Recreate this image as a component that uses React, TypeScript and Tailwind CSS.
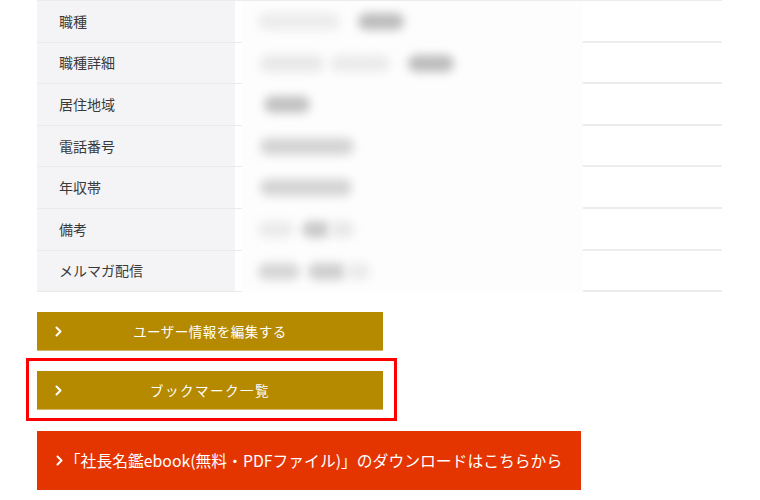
import React from "react";

const rows: { label: string; blobs: { l: number; w: number; c: string }[] }[] = [
  { label: "職種", blobs: [{ l: 16, w: 82, c: "#ececec" }, { l: 116, w: 46, c: "#bdbdbd" }] },
  { label: "職種詳細", blobs: [{ l: 18, w: 64, c: "#e8e8e8" }, { l: 88, w: 60, c: "#ebebeb" }, { l: 166, w: 46, c: "#bdbdbd" }] },
  { label: "居住地域", blobs: [{ l: 22, w: 46, c: "#c2c2c2" }] },
  { label: "電話番号", blobs: [{ l: 18, w: 94, c: "#d4d4d4" }] },
  { label: "年収帯", blobs: [{ l: 18, w: 92, c: "#d4d4d4" }] },
  { label: "備考", blobs: [{ l: 16, w: 36, c: "#ebebeb" }, { l: 60, w: 28, c: "#cacaca" }, { l: 88, w: 24, c: "#e8e8e8" }] },
  { label: "メルマガ配信", blobs: [{ l: 16, w: 42, c: "#d6d6d6" }, { l: 66, w: 38, c: "#cfcfcf" }, { l: 104, w: 24, c: "#ebebeb" }] },
];

const Chevron = () => (
  <svg width="7" height="11" viewBox="0 0 7 11" className="shrink-0">
    <path d="M1.5 1.5 L5.5 5.5 L1.5 9.5" fill="none" stroke="#fff" strokeWidth="2" strokeLinecap="round" strokeLinejoin="round" />
  </svg>
);

export default function App() {
  return (
    <div
      className="relative w-[760px] h-[500px] bg-white overflow-hidden"
      style={{ fontFamily: '"Noto Sans CJK JP", "Noto Sans", sans-serif' }}
    >
      <div className="pl-[37px] w-[722px]">
        <div className="flex flex-col border-t border-[#ececec]">
          {rows.map((r) => (
            <div key={r.label} className="flex h-[41.6px]">
              <div className="w-[198px] bg-[#f4f4f6] border-b border-[#eaeaea] flex items-center pl-[22px] text-[14px] text-[#3a3a3a]">
                {r.label}
              </div>
              <div className="w-[7px] border-b border-[#eaeaea]" />
              <div className="w-[341px] bg-[#fdfdfd] relative">
                {r.blobs.map((b, i) => (
                  <div
                    key={i}
                    className="absolute top-[12px] h-[17px] rounded-full blur-[5px]"
                    style={{ left: b.l, width: b.w, background: b.c }}
                  />
                ))}
              </div>
              <div className="flex-1 border-b-2 border-[#ececec]" />
            </div>
          ))}
        </div>

        <div className="mt-[20px] flex flex-col gap-[20px] w-[346px]">
          <div className="h-[39px] bg-[#b68a00] border-b border-[#d4b764] flex items-center pl-[18px] text-white">
            <Chevron />
            <span className="flex-1 text-center text-[13.5px] tracking-[0.5px] pr-[25px]">ユーザー情報を編集する</span>
          </div>
          <div className="h-[39px] bg-[#b68a00] border-b border-[#d4b764] flex items-center pl-[18px] text-white">
            <Chevron />
            <span className="flex-1 text-center text-[13.5px] tracking-[1.5px] pr-[25px]">ブックマーク一覧</span>
          </div>
        </div>

        <div className="mt-[21px] w-[544px] h-[59px] bg-[#e43400] flex items-center justify-center gap-[2px] text-white text-[15.8px]">
          <Chevron />
          <span>「社長名鑑ebook(無料・PDFファイル)」のダウンロードはこちらから</span>
        </div>
      </div>

      <div className="absolute left-[26px] top-[358px] w-[371px] h-[63px] border-[3px] border-[#ff0000]" />
    </div>
  );
}
